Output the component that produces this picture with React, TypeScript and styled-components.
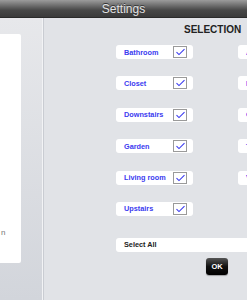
import React from "react";
import styled, { createGlobalStyle } from "styled-components";

const GlobalStyle = createGlobalStyle`
	html, body {
		margin: 0;
		padding: 0;
		background: #e1e3e7;
	}
	body {
		font-family: "Liberation Sans", Arial, sans-serif;
	}
`;

const firstColumn = ["Bathroom", "Closet", "Downstairs", "Garden", "Living room", "Upstairs"];
const secondColumn = ["Attic", "Kitchen", "Office", "Terrace", "Veranda"];

const CheckMark = () => (
	<svg width="12" height="10" viewBox="0 0 12 10">
		<path d="M2.5 5.2 L5 7.6 L10.5 2.2" fill="none" stroke="#3b3bf0" strokeWidth="1.1" />
	</svg>
);

const Room = ({ name }: { name: string }) => (
	<Item>
		<Label>{name}</Label>
		<Box>
			<CheckMark />
		</Box>
	</Item>
);

const App = () => {
	return (
		<Screen>
			<GlobalStyle />
			<NavBar>
				<Title>Settings</Title>
			</NavBar>
			<Main>
				<Master>
					<Table>
						<Cut>n</Cut>
					</Table>
				</Master>
				<Detail>
					<Heading>SELECTION</Heading>
					<Grid>
						{firstColumn.concat(secondColumn).map((name) => (
							<Room key={name} name={name} />
						))}
					</Grid>
					<SelectAll>Select All</SelectAll>
					<OkButton>OK</OkButton>
				</Detail>
			</Main>
		</Screen>
	);
};

const Screen = styled.div`
	width: 247px;
	height: 300px;
	display: flex;
	flex-direction: column;
	overflow: hidden;
`;
const NavBar = styled.div`
	height: 17px;
	flex: none;
	display: flex;
	align-items: center;
	justify-content: center;
	background: linear-gradient(#9c9c9c 0%, #6a6a6a 35%, #474747 60%, #3a3a3a 100%);
	border-bottom: 1px solid #2a2a2a;
`;
const Title = styled.span`
	color: #e4e4e4;
	font-size: 12px;
	line-height: 14px;
	text-shadow: 0 -1px 0 #333;
`;
const Main = styled.div`
	flex: 1;
	display: flex;
	min-height: 0;
`;
const Master = styled.div`
	width: 42px;
	flex: none;
	padding-top: 16px;
	background: linear-gradient(#e7e8eb, #d2d5db);
	border-right: 1px solid #f2f3f5;
	box-shadow: 1px 0 0 #c9ccd2;
`;
const Table = styled.div`
	width: 21px;
	height: 229px;
	background: #fff;
	border-radius: 0 2px 2px 0;
	position: relative;
	overflow: hidden;
`;
const Cut = styled.span`
	position: absolute;
	left: 1px;
	top: 194px;
	font-size: 8px;
	color: #777;
`;
const Detail = styled.div`
	flex: 1;
	min-width: 0;
	overflow: hidden;
	background: #e1e3e7;
	padding-left: 72px;
	margin-left: 1px;
`;
const Heading = styled.div`
	font-size: 10px;
	line-height: 12px;
	font-weight: bold;
	color: #222;
	margin: 6px 0 9px 68px;
	white-space: nowrap;
`;
const Grid = styled.div`
	display: grid;
	grid-template-rows: repeat(6, 14px);
	grid-auto-flow: column;
	grid-auto-columns: 77px;
	column-gap: 45px;
	row-gap: 17.4px;
`;
const Item = styled.div`
	background: #fff;
	border-radius: 3px;
	display: flex;
	align-items: center;
	justify-content: space-between;
	padding: 0 6px 0 8px;
`;
const Label = styled.span`
	font-size: 7.3px;
	font-weight: bold;
	color: #3b3bf0;
	white-space: nowrap;
`;
const Box = styled.div`
	width: 12px;
	height: 10px;
	border: 1px solid #9a9a9a;
	background: #fff;
	display: flex;
`;
const SelectAll = styled.div`
	width: 200px;
	height: 14px;
	margin-top: 22px;
	background: #fff;
	border-radius: 3px;
	padding-left: 8px;
	font-size: 7.3px;
	line-height: 14px;
	font-weight: bold;
	color: #222;
`;
const OkButton = styled.div`
	width: 22px;
	height: 17px;
	margin: 6px 0 0 90px;
	border-radius: 3px;
	background: linear-gradient(#555, #111 50%, #000);
	color: #fff;
	font-size: 7.5px;
	font-weight: bold;
	line-height: 17px;
	text-align: center;
	box-shadow: 0 1px 1px rgba(0, 0, 0, 0.3);
`;

export default App;
